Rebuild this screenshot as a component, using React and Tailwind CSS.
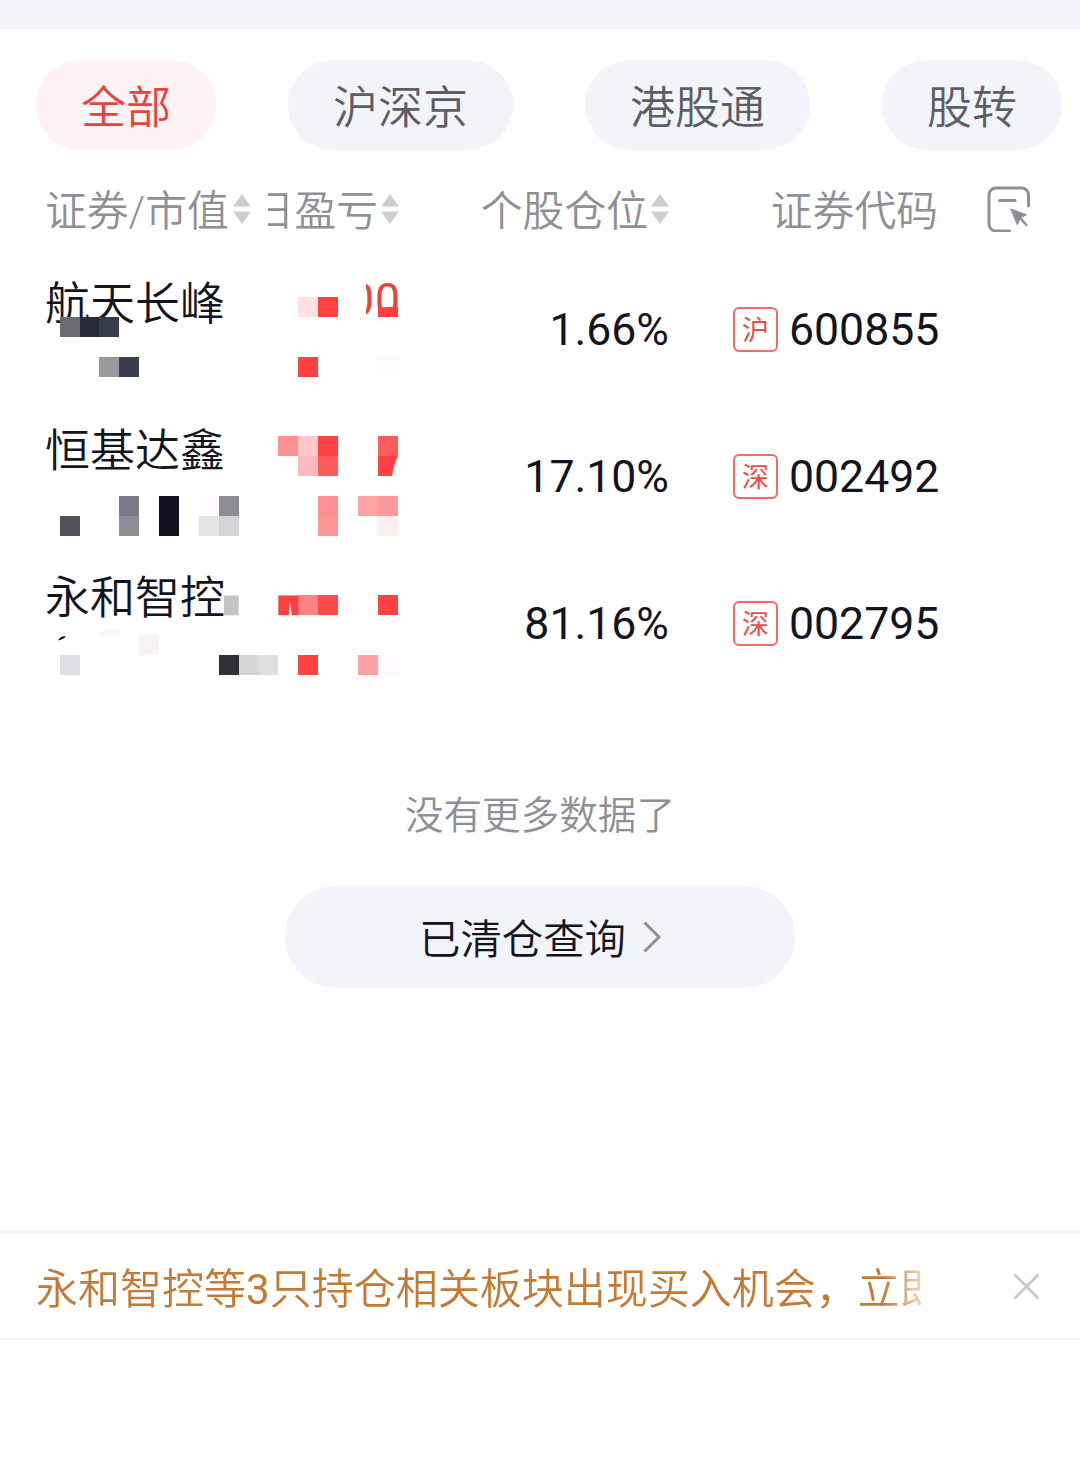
import React from 'react';

const tabs = ['全部', '沪深京', '港股通', '股转'];

const holdings = [
    { name: '航天长峰', profit: '00', ratio: '1.66%', market: '沪', code: '600855' },
    { name: '恒基达鑫', ratio: '17.10%', market: '深', code: '002492' },
    { name: '永和智控', ratio: '81.16%', market: '深', code: '002795' },
];

// Private amounts are hidden by blocks: [column, row, color]
const CELL = 19.89;
const blocks = [
    [3, 16, '#6b6973'], [4, 16, '#282c38'], [5, 16, '#383b4a'],
    [5, 18, '#9c999c'], [6, 18, '#383c4b'],
    [15, 15, '#ffe0e5'], [16, 15, '#ff4142'], [15, 18, '#ff4142'], [19, 18, '#fefaff'],
    [3, 26, '#525159'], [6, 25, '#7b7984'], [6, 26, '#8c8e94'],
    [8, 25, '#10101e'], [8, 26, '#10101e'], [10, 25, '#fffaff'], [11, 25, '#8c8e94'],
    [10, 26, '#e6e3e6'], [11, 26, '#d4d3d6'],
    [14, 22, '#ff9094'], [15, 22, '#ffc8cd'], [16, 22, '#ff4142'],
    [15, 23, '#ffb9bd'], [16, 23, '#ff5a5c'], [19, 22, '#ff5a5c'],
    [16, 25, '#ff9094'], [16, 26, '#ff9494'], [18, 25, '#ffa2a5'], [19, 25, '#ff9a9c'], [19, 26, '#ffefef'],
    [15, 30, '#ff8284'], [16, 30, '#ff494a'], [19, 30, '#ff4142'],
    [7, 32, '#f7f3f7'], [3, 33, '#dedfe6'], [11, 33, '#313039'], [12, 33, '#d6d5d6'], [13, 33, '#dedfde'],
    [15, 33, '#ff4142'], [18, 33, '#ffa0a5'], [19, 33, '#fffaff'],
];

function Sorter() {
    return (
        <svg className="ml-[3px] -mt-[7px] h-[30px] w-[18px] shrink-0" viewBox="0 0 18 30" fill="#cecece">
            <path d="M9 0 18 12.5H0zM9 30 18 17.5H0z" />
        </svg>
    );
}

function SelectIcon() {
    return (
        <svg className="-mt-[7px] h-[46px] w-[46px] shrink-0" viewBox="0 0 46 46" fill="none" stroke="#8f9097" strokeWidth="3" strokeLinecap="round">
            <path d="M42.5 20V9a7 7 0 0 0-7-7H10a7 7 0 0 0-7 7v29a7 7 0 0 0 7 7h13.5" />
            <path d="M13.5 14.500H29" />
            <path d="m34 32 6.500 7" strokeWidth="2.5" />
            <path d="m25 23 15.500 5.800-6 3-3 6.700z" fill="#8f9097" stroke="#8f9097" strokeWidth="1" />
        </svg>
    );
}

function PrivacyBlocks() {
    return (
        <svg className="pointer-events-none absolute left-0 top-0" width="420" height="700" shapeRendering="crispEdges">
            {blocks.map(([col, row, color]) => (
                <rect key={`${col}-${row}`} x={col * CELL} y={row * CELL - 1.3} width={CELL} height={CELL} fill={color} />
            ))}
            <g shapeRendering="auto">
                <path d="M378 307.500l20-1v10.500h-20z" fill="#ff4142" />
                <path d="M378 456h20q-4 8-6 20h-14z" fill="#ff4142" />
                <path d="M224 595.400h14.700v19.900H224z" fill="#c5c3c6" />
                <path d="M278.300 595.400h20v19.900h-6.500l-2-14-1 14h-10.500z" fill="#ff4142" />
                <path d="M58 640.500q3-5 8-4-2 2.500-8 4z" fill="#10101e" />
                <path d="M99.500 631h20v4h-20z" fill="#f7f7f7" />
            </g>
        </svg>
    );
}

function HoldingRow({ item }) {
    return (
        <div className="flex h-[147px] items-center">
            <div className="flex h-full w-[223px] flex-col pt-[26px] text-[45px] leading-[45px] whitespace-nowrap">
                {item.name}
            </div>
            <div className="flex h-full w-[132px] items-start justify-end pt-[22px]">
                {item.profit && (
                    <span className="-mr-px flex w-[35px] justify-end overflow-hidden text-[44.5px] leading-[45px] font-normal tracking-[1px] text-[#e8423f]">
                        {item.profit}
                    </span>
                )}
            </div>
            <div className="w-[269px] pt-[2px] text-right text-[44.6px] font-normal">{item.ratio}</div>
            <div className="flex flex-1 items-center pl-[64px] text-[44.6px] font-normal">
                <span className="mr-[11px] flex size-[45px] items-center justify-center rounded-md border-2 border-[#ee6c69] pt-[4px] text-[27px] leading-none text-[#ee4a48]">
                    {item.market}
                </span>
                <span className="-mb-[2px]">{item.code}</span>
            </div>
        </div>
    );
}

export default function App() {
    return (
        <div className="relative h-[1484px] w-[1080px] overflow-hidden bg-white font-[Roboto,'Noto_Sans_CJK_SC',sans-serif] font-[350] text-[#14141f]">
            <div className="h-[29px] bg-[#f3f4f9]" />

            <div className="flex gap-[72px] pt-[31px] pl-9">
                {tabs.map((tab, i) => (
                    <button
                        key={tab}
                        className={`h-[90px] shrink-0 rounded-full px-[45px] pt-[6px] text-[45px] leading-none ${i === 0 ? 'bg-[#fff2f4] text-[#e8423f]' : 'bg-[#f3f4f9] text-[#5c5d66]'}`}
                    >
                        {tab}
                    </button>
                ))}
            </div>

            <div className="flex h-[106px] items-center pt-[18px] pl-[45px] text-[41.8px] leading-[44px] whitespace-nowrap text-[#8f9097]">
                <div className="flex w-[223px] items-center">证券/市值<span className="ml-px flex"><Sorter /></span></div>
                <div className="flex w-[131px] items-center justify-end overflow-hidden">日盈亏<Sorter /></div>
                <div className="flex w-[270px] items-center justify-end">个股仓位<Sorter /></div>
                <div className="w-[269px] text-right">证券代码</div>
                <div className="pl-[48px]"><SelectIcon /></div>
            </div>

            <div className="pl-[45px]">
                {holdings.map((item) => (
                    <HoldingRow key={item.code} item={item} />
                ))}
            </div>

            <p className="pt-[96px] text-center text-[38.6px] leading-[46px] text-[#8f9097]">没有更多数据了</p>

            <button className="mx-auto mt-[47px] flex h-[102px] w-[510px] items-center justify-center rounded-full bg-[#f3f4f9] text-[41.4px]">
                <span className="pt-[6px]">已清仓查询</span>
                <svg className="ml-[17px] h-8 w-[18px]" viewBox="0 0 18 32" fill="none" stroke="#8f9097" strokeWidth="3">
                    <path d="M1.500 1.500 16 16 1.500 30.500" />
                </svg>
            </button>

            <div className="mt-[243px] flex h-[109px] items-center border-y-2 border-[#f5f5f6] pl-9">
                <div className="w-[886px] overflow-hidden pt-[8px] text-[42px] whitespace-nowrap text-[#c47a33] [mask-image:linear-gradient(to_right,#000_845px,transparent_905px)]">
                    永和智控等<span className="font-normal">3</span>只持仓相关板块出现买入机会，立即查看
                </div>
                <svg className="mt-px ml-[91px] size-[27px]" viewBox="0 0 27 27" fill="none" stroke="#c8c9cc" strokeWidth="2.800">
                    <path d="m1.500 1.500 24 24m0-24-24 24" />
                </svg>
            </div>

            <PrivacyBlocks />
        </div>
    );
}
